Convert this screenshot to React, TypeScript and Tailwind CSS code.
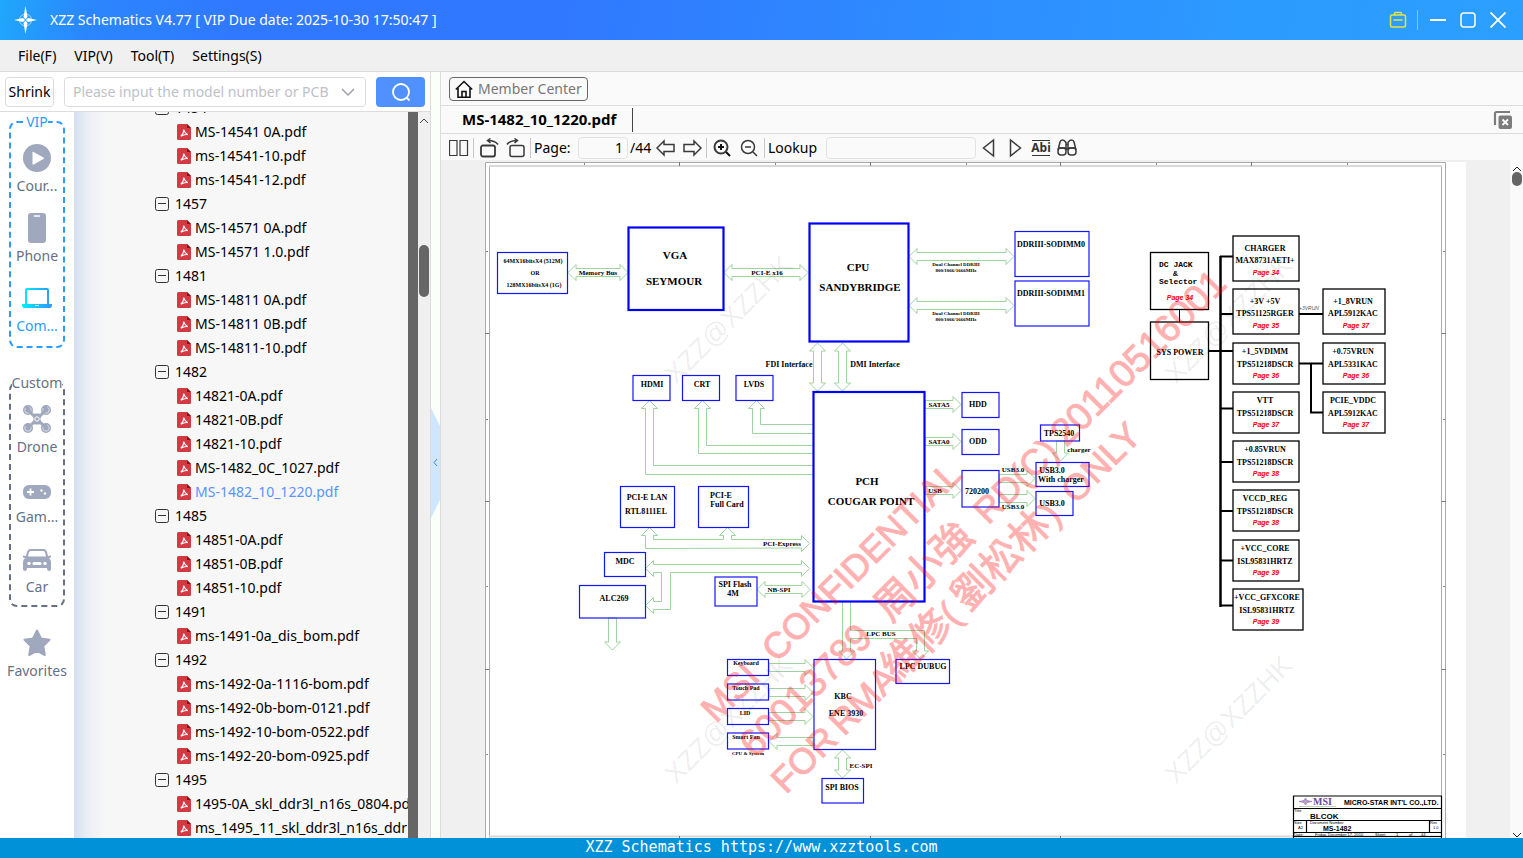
import type { ReactNode } from "react";

type TreeGroup = { name: string; files: string[] };

const tree: TreeGroup[] = [
    { name: "1454", files: ["MS-14541 0A.pdf", "ms-14541-10.pdf", "ms-14541-12.pdf"] },
    { name: "1457", files: ["MS-14571 0A.pdf", "MS-14571 1.0.pdf"] },
    { name: "1481", files: ["MS-14811 0A.pdf", "MS-14811 0B.pdf", "MS-14811-10.pdf"] },
    { name: "1482", files: ["14821-0A.pdf", "14821-0B.pdf", "14821-10.pdf", "MS-1482_0C_1027.pdf", "MS-1482_10_1220.pdf"] },
    { name: "1485", files: ["14851-0A.pdf", "14851-0B.pdf", "14851-10.pdf"] },
    { name: "1491", files: ["ms-1491-0a_dis_bom.pdf"] },
    { name: "1492", files: ["ms-1492-0a-1116-bom.pdf", "ms-1492-0b-bom-0121.pdf", "ms-1492-10-bom-0522.pdf", "ms-1492-20-bom-0925.pdf"] },
    { name: "1495", files: ["1495-0A_skl_ddr3l_n16s_0804.pdf", "ms_1495_11_skl_ddr3l_n16s_ddr"] },
];

const activeFile = "MS-1482_10_1220.pdf";

/* ---------- Title bar and menu ---------- */

const TitleBar = () => (
    <header className="flex h-10 shrink-0 items-center bg-[linear-gradient(100deg,#1fa8fb_0%,#2b86fd_6%,#3078ff_16%,#3078ff_36%,#2c9bff_82%,#2b9fff_100%)] pr-[17px] pl-[13px] text-white">
        <svg width="25" height="30" viewBox="0 0 25 30" aria-hidden="true">
            <circle cx="12.5" cy="15" r="6" fill="none" stroke="#a9dcff" strokeWidth="1" />
            <path d="M12.5 1l2 11-2 2.500-2-2.500zM12.500 29l2-11-2-2.500-2 2.500z" fill="#fff" />
            <path d="M1 15l9-2 2 2-2 2zM24 15l-9-2-2 2 2 2z" fill="#fff" />
        </svg>
        <h1 className="ml-3 flex-1 text-sm whitespace-pre">XZZ Schematics V4.77 [ VIP Due date: 2025-10-30 17:50:47 ]</h1>
        <button type="button" aria-label="Toolbox" className="text-[#e2e53c]">
            <svg width="18" height="18" viewBox="0 0 18 18" fill="none" stroke="currentColor" strokeWidth="1.5">
                <rect x="1.500" y="4" width="15" height="12" rx="1.500" />
                <path d="M5.500 4V2.500Q5.500 1.500 6.500 1.500h5q1 0 1 1V4M4.500 9h9" />
            </svg>
        </button>
        <span className="mr-3 ml-2.5 h-5 w-px bg-white/40" />
        <button type="button" aria-label="Minimize">
            <svg width="16" height="16" viewBox="0 0 16 16"><path d="M0 8h16" stroke="#fff" strokeWidth="2" /></svg>
        </button>
        <button type="button" aria-label="Maximize" className="ml-3.5">
            <svg width="16" height="16" viewBox="0 0 16 16"><rect x="1" y="1" width="14" height="14" rx="3" fill="none" stroke="#fff" strokeWidth="1.500" /></svg>
        </button>
        <button type="button" aria-label="Close" className="ml-3.5">
            <svg width="16" height="16" viewBox="0 0 16 16"><path d="M.5.5l15 15M15.500.5l-15 15" stroke="#fff" strokeWidth="1.800" /></svg>
        </button>
    </header>
);

const MenuBar = () => (
    <nav className="flex h-8 shrink-0 items-center gap-[18px] border-b border-[#dcdcdc] bg-[#f0f0f0] px-[18px] pt-px">
        {["File(F)", "VIP(V)", "Tool(T)", "Settings(S)"].map((item) => (
            <button key={item} type="button">{item}</button>
        ))}
    </nav>
);

/* ---------- Left pane ---------- */

const SearchRow = () => (
    <form className="flex h-10 shrink-0 items-center border-b border-[#dcdcdc] bg-white px-[5px]">
        <button type="button" className="h-[30px] w-[49px] rounded border border-[#dcdcdc]">Shrink</button>
        <div className="ml-2.5 flex h-[30px] min-w-0 flex-1 items-center rounded border border-[#dcdcdc] pr-2.5 pl-2">
            <input
                type="text"
                aria-label="Model number"
                placeholder="Please input the model number or PCB"
                className="min-w-0 flex-1 outline-none placeholder:text-[#bdc1c8]"
            />
            <svg width="14" height="14" viewBox="0 0 14 14" fill="none" stroke="#9aa0ab" strokeWidth="1.500" aria-hidden="true"><path d="M1 4l6 6 6-6" /></svg>
        </div>
        <button type="submit" aria-label="Search" className="ml-2.5 flex h-[30px] w-[49px] items-center justify-center rounded bg-[#5091ff]">
            <svg width="20" height="20" viewBox="0 0 20 20" fill="none" stroke="#fff" strokeWidth="1.800"><circle cx="10" cy="10" r="8" /><path d="M15.500 15.500l3 3" /></svg>
        </button>
    </form>
);

const PlayIcon = () => (
    <svg width="28" height="28" viewBox="0 0 28 28"><circle cx="14" cy="14" r="14" fill="#a0a8bd" /><path d="M9.500 8.500v11.500q0 1 1 .5l10-5.500q1-.8 0-1.500l-10-5.500q-1-.5-1 .5z" fill="#fff" /></svg>
);
const PhoneIcon = () => (
    <svg width="28" height="30" viewBox="0 0 28 30"><rect x="5" width="18" height="30" rx="3" fill="#a0a8bd" /><path d="M11.500 3h5" stroke="#fff" strokeWidth="1.500" strokeLinecap="round" /></svg>
);
const LaptopIcon = () => (
    <svg width="30" height="22" viewBox="0 0 30 22">
        <defs><linearGradient id="laptop"><stop stopColor="#00f0ff" /><stop offset="1" stopColor="#2f96f8" /></linearGradient></defs>
        <path d="M5 1h20q2 0 2 2v14h3q0 4-2 4H2q-2 0-2-4h3V3q0-2 2-2zM5 3v14h20V3z" fill="url(#laptop)" fillRule="evenodd" />
        <path d="M13 18.500h4" stroke="#bfeaff" />
    </svg>
);
const DroneIcon = () => (
    <svg width="28" height="28" viewBox="0 0 28 28">
        <path d="M12 10h4v8h-4z" fill="#a0a8bd" stroke="#a0a8bd" strokeWidth="3" strokeLinejoin="round" />
        {[[5, 5], [23, 5], [5, 23], [23, 23]].map(([x, y]) => (
            <g key={`${x}-${y}`} fill="#a0a8bd">
                <circle cx={x} cy={y} r="5" />
                <circle cx={x} cy={y} r="3.200" stroke="#e6e9f0" strokeWidth=".8" strokeDasharray="12 4" />
            </g>
        ))}
        <path d="M5 5l7 7M23 5l-7 7M5 23l7-7M23 23l-7-7" stroke="#a0a8bd" strokeWidth="3" />
        <circle cx="14" cy="14" r="2.200" fill="none" stroke="#fff" />
    </svg>
);
const GamepadIcon = () => (
    <svg width="28" height="20" viewBox="0 -6 28 20"><rect width="28" height="14" rx="6" fill="#a0a8bd" /><path d="M4 7h7M7.500 3.500v7" stroke="#fff" strokeWidth="1.800" /><circle cx="18.500" cy="5.500" r="1.200" fill="#fff" /><circle cx="22" cy="8.500" r="1.200" fill="#fff" /></svg>
);
const CarIcon = () => (
    <svg width="28" height="26" viewBox="0 -2 28 26">
        <path d="M7 1h14q2 0 3 3l1 4 3-.5v2l-2 .5q2 2 2 4v7q0 2-2 2t-2-3H4q0 3-2 3t-2-2v-7q0-2 2-4L0 9.500v-2L3 8l1-4q1-3 3-3zM7.500 3Q6.500 3 6 4.500L5 8.500h18l-1-4Q21.500 3 20.500 3z" fill="#a0a8bd" fillRule="evenodd" />
        <circle cx="6" cy="15.500" r="1.700" fill="#fff" /><circle cx="22" cy="15.500" r="1.700" fill="#fff" /><path d="M11 15.500h6" stroke="#fff" strokeWidth="3" strokeLinecap="round" />
    </svg>
);
const StarIcon = () => (
    <svg width="28" height="28" viewBox="0 0 28 28"><path d="M14 1.500l4 8 8.500 1.300-6.200 6.200 1.500 9L14 21.800 6.200 26l1.500-9-6.200-6.200L10 9.500z" fill="#a0a8bd" stroke="#a0a8bd" strokeWidth="2" strokeLinejoin="round" /></svg>
);

const RailItem = ({ icon, label, active }: { icon: ReactNode; label: string; active?: boolean }) => (
    <button type="button" className={active ? "flex w-full flex-col items-center pt-3 pb-1.5 text-[#2d9bff]" : "flex w-full flex-col items-center pt-3 pb-1.5 text-[#667085]"}>
        <span className="flex h-7 items-center justify-center">{icon}</span>
        <span className="mt-1 leading-5">{label}</span>
    </button>
);

const CategoryRail = () => (
    <aside className="flex w-[74px] shrink-0 flex-col items-center overflow-hidden bg-white">
        <fieldset className="w-14 rounded-lg border-2 border-dashed border-[#2d9bff] pb-1">
            <legend className="mx-auto leading-5 text-[#2d9bff]">VIP</legend>
            <RailItem icon={<PlayIcon />} label="Cour..." />
            <RailItem icon={<PhoneIcon />} label="Phone" />
            <RailItem icon={<LaptopIcon />} label="Com..." active />
        </fieldset>
        <fieldset className="mt-[25px] w-14 rounded-lg border-2 border-dashed border-[#667085] pb-0.5">
            <legend className="mx-auto leading-5 text-[#667085]">Custom</legend>
            <RailItem icon={<DroneIcon />} label="Drone" />
            <RailItem icon={<GamepadIcon />} label="Gam..." />
            <RailItem icon={<CarIcon />} label="Car" />
        </fieldset>
        <div className="mt-2.5 w-full">
            <RailItem icon={<StarIcon />} label="Favorites" />
        </div>
    </aside>
);

const PdfIcon = () => (
    <svg width="14" height="16" viewBox="0 0 14 16" className="shrink-0" aria-hidden="true">
        <path d="M1.500 0H10l4 4v10.500q0 1.500-1.500 1.500h-11Q0 16 0 14.500v-13Q0 0 1.500 0z" fill="#d23a42" />
        <path d="M10 0l4 4h-4z" fill="#8f1219" />
        <path d="M6.800 5.500q.6 3.500 4 5.200-3-.6-7 1.500 3-2.500 3-6.700" fill="none" stroke="#fff" strokeWidth="1.100" />
    </svg>
);

const FileTree = () => (
    <div className="min-w-0 flex-1 overflow-hidden bg-[linear-gradient(90deg,#d5dff0_0px,#ebeff5_14px,#f7f7f7_32px)]">
        <ul className="-mt-4 leading-6 whitespace-nowrap">
            {tree.map((group) => (
                <li key={group.name}>
                    <button type="button" className="flex h-6 items-center gap-1.5 pl-[81px]">
                        <svg width="14" height="14" viewBox="0 0 14 14" fill="none" stroke="#333" aria-hidden="true"><rect x=".5" y=".5" width="13" height="13" rx="2" /><path d="M3 6.500h8" /></svg>
                        {group.name}
                    </button>
                    <ul>
                        {group.files.map((file) => (
                            <li key={file}>
                                <button type="button" className={file === activeFile ? "flex h-6 items-center gap-1 pl-[103px] text-[#5b93ff]" : "flex h-6 items-center gap-1 pl-[103px]"}>
                                    <PdfIcon />
                                    {file}
                                </button>
                            </li>
                        ))}
                    </ul>
                </li>
            ))}
        </ul>
    </div>
);

const LeftPane = () => (
    <section className="flex w-[431px] shrink-0 flex-col border-r border-[#dcdcdc]">
        <SearchRow />
        <div className="flex min-h-0 flex-1">
            <CategoryRail />
            <FileTree />
            <div className="w-2.5 shrink-0 bg-[#666]" />
            <div className="flex w-3 shrink-0 flex-col items-center bg-[#f0f0f0] pt-1.5">
                <svg width="10" height="6" viewBox="0 0 10 6" fill="none" stroke="#444"><path d="M1 5l4-4 4 4" /></svg>
                <div className="mt-[121px] h-[52px] w-2.5 rounded-full bg-[#666]" />
            </div>
        </div>
    </section>
);

const Splitter = () => (
    <div className="flex w-2.5 shrink-0 items-center border-r border-[#dcdcdc] bg-[#fafffa]">
        <button type="button" aria-label="Collapse panel" className="mt-4">
            <svg width="9" height="110" viewBox="0 0 9 110"><path d="M0 0l9 18v74l-9 18z" fill="#cfe7fd" /><path d="M6 51l-3 3.500 3 3.500" fill="none" stroke="#3b8be0" /></svg>
        </button>
    </div>
);

/* ---------- Schematic page ---------- */

const arrowPath = (from: number, to: number, mid: number, vertical: boolean, heads: "both" | "end" | "start") => {
    const dir = to > from ? 1 : -1;
    const points: [number, number][] = [];
    if (heads !== "end") {
        points.push([from + 8 * dir, mid + 4], [from + 8 * dir, mid + 8], [from, mid], [from + 8 * dir, mid - 8], [from + 8 * dir, mid - 4]);
    } else {
        points.push([from, mid + 4], [from, mid - 4]);
    }
    if (heads !== "start") {
        points.push([to - 8 * dir, mid - 4], [to - 8 * dir, mid - 8], [to, mid], [to - 8 * dir, mid + 8], [to - 8 * dir, mid + 4]);
    } else {
        points.push([to, mid - 4], [to, mid + 4]);
    }
    return points.map(([a, b]) => (vertical ? `${b},${a}` : `${a},${b}`)).join(" ");
};

// [from, to, mid, vertical, heads]
const arrows: [number, number, number, boolean, "both" | "end" | "start"][] = [
    [568, 628, 272.5, false, "both"],
    [724, 808, 272.5, false, "both"],
    [909, 1014, 256.5, false, "both"],
    [909, 1014, 305.5, false, "both"],
    [343, 391, 817.5, true, "both"],
    [343, 391, 842.5, true, "both"],
    [925, 961, 404.5, false, "end"],
    [925, 961, 441.5, false, "end"],
    [925, 961, 490.5, false, "end"],
    [999, 1035, 478.5, false, "end"],
    [999, 1035, 498.5, false, "end"],
    [441, 461, 1060.5, true, "end"],
    [757, 810, 589.5, false, "both"],
    [618, 650, 612.5, true, "end"],
    [769, 813, 667.5, false, "end"],
    [769, 813, 692.5, false, "end"],
    [769, 813, 716.5, false, "end"],
    [769, 813, 741.5, false, "start"],
    [750, 778, 842.5, true, "both"],
];

const busLines = [
    "M813 474.500H645.500V408.500h-4l8-8 8 8h-4V465.500H813",
    "M813 453.500H698.500V408.500h-4l8-8 8 8h-4V445.500H813",
    "M813 433.500H752.500V408.500h-4l8-8 8 8h-4V424.500H813",
    "M645.500 548.500V535.500h-4l8-8 8 8h-4v4H723.500v-4h-4l8-8 8 8h-4v4H801.500v-4l8 8-8 8v-3.500z",
    "M661.500 572.500h-8v4l-8-8 8-8v4H801.500v-4l8 8-8 8v-4H670.500v37H653.500v4l-8-8 8-8v4h8z",
    "M842.500 602v49h-4l8 8 8-8h-4v-12.500h66v12.500h-4l8 8 8-8h-4v-20.500h-74V602",
];

// [x, y, width, height]
const boxes: [number, number, number, number][] = [
    [497.5, 252.5, 70, 41], [1015, 231.5, 74, 45], [1015, 281, 74, 45],
    [633, 375.5, 37, 25], [682.5, 375.5, 37, 25], [736, 375.5, 37, 25],
    [962, 392.5, 37, 25], [962, 429.5, 37, 25], [962, 470.5, 37, 36.5], [1040.5, 425, 39, 16],
    [1036, 462.5, 53, 24], [1036, 491.5, 37, 24],
    [620.5, 486.5, 54, 41], [698.5, 486.5, 50, 41], [604.5, 552.5, 41, 24], [579.5, 585.5, 66, 32.5],
    [715, 577, 42, 29], [814, 659.5, 61.5, 90], [896, 659.5, 53.5, 24],
    [727.5, 659.5, 41, 16], [727.5, 684, 41, 16], [727.5, 708.5, 41, 16], [727.5, 733, 41, 16], [822, 778.5, 41.5, 24.5],
];

const chipBoxes: [number, number, number, number][] = [
    [628.5, 227.5, 95, 82.5], [809.5, 223.5, 99, 118], [813.5, 392, 111, 209.5],
];

// [text, x, baseline]
type Label = [string, number, number];

const chipLabels: Label[] = [
    ["VGA", 675, 259], ["SEYMOUR", 674, 285], ["CPU", 858, 271], ["SANDYBRIDGE", 860, 291],
    ["PCH", 867, 485], ["COUGAR POINT", 871, 505],
];

const boxLabels: Label[] = [
    ["DDRIII-SODIMM0", 1051, 247], ["DDRIII-SODIMM1", 1051, 296], ["HDMI", 652, 387], ["CRT", 702, 387], ["LVDS", 754, 387],
    ["HDD", 978, 407], ["ODD", 978, 444], ["720200", 977, 494], ["TPS2540", 1059, 436], ["USB3.0", 1052, 473], ["With charger", 1061, 482], ["USB3.0", 1052, 506],
    ["PCI-E LAN", 647, 500], ["RTL8111EL", 646, 514], ["PCI-E", 721, 498], ["Full Card", 727, 507], ["MDC", 625, 564], ["ALC269", 614, 601],
    ["SPI Flash", 735, 587], ["4M", 733, 596], ["KBC", 843, 699], ["ENE 3930", 846, 716], ["LPC DUBUG", 923, 669], ["SPI BIOS", 842, 790],
    ["FDI Interface", 789, 367], ["DMI Interface", 875, 367],
];

const busLabels: Label[] = [
    ["Memory Bus", 598, 275], ["PCI-E x16", 767, 275], ["SATA5", 939, 407], ["SATA0", 939, 444], ["USB", 935, 493],
    ["USB3.0", 1013, 472], ["USB3.0", 1013, 509], ["charger", 1079, 452], ["PCI-Express", 782, 546], ["NB-SPI", 779, 592],
    ["LPC BUS", 881, 636], ["EC-SPI", 861, 768],
];

const smallLabels: Label[] = [
    ["64MX16bitsX4 (512M)", 533, 263], ["OR", 535, 275], ["128MX16bitsX4 (1G)", 534, 287],
    ["Keyboard", 746, 665], ["Touch Pad", 746, 690], ["LID", 745, 715], ["Smart Fan", 746, 739],
];

const tinyLabels: Label[] = [
    ["Dual Channel DDRIII", 956, 266], ["800/1066/1666MHz", 956, 272],
    ["Dual Channel DDRIII", 956, 315], ["800/1066/1666MHz", 956, 321], ["CPU & System", 748, 755],
];

type Regulator = { x: number; y: number; w: number; h: number; lines: [string, string]; page: string };

const regulators: Regulator[] = [
    { x: 1233, y: 236, w: 66, h: 45, lines: ["CHARGER", "MAX8731AETI+"], page: "Page 34" },
    { x: 1233, y: 289, w: 66, h: 45, lines: ["+3V +5V", "TPS51125RGER"], page: "Page 35" },
    { x: 1233, y: 343, w: 66, h: 41, lines: ["+1_5VDIMM", "TPS51218DSCR"], page: "Page 36" },
    { x: 1233, y: 392, w: 66, h: 41, lines: ["VTT", "TPS51218DSCR"], page: "Page 37" },
    { x: 1233, y: 441, w: 66, h: 41, lines: ["+0.85VRUN", "TPS51218DSCR"], page: "Page 38" },
    { x: 1233, y: 490, w: 66, h: 41, lines: ["VCCD_REG", "TPS51218DSCR"], page: "Page 38" },
    { x: 1233, y: 540, w: 66, h: 41, lines: ["+VCC_CORE", "ISL95831HRTZ"], page: "Page 39" },
    { x: 1233, y: 589, w: 70, h: 41, lines: ["+VCC_GFXCORE", "ISL95831HRTZ"], page: "Page 39" },
    { x: 1323, y: 289, w: 62, h: 45, lines: ["+1_8VRUN", "APL5912KAC"], page: "Page 37" },
    { x: 1323, y: 343, w: 62, h: 41, lines: ["+0.75VRUN", "APL5331KAC"], page: "Page 36" },
    { x: 1323, y: 392, w: 62, h: 41, lines: ["PCIE_VDDC", "APL5912KAC"], page: "Page 37" },
];

const Labels = ({ items, className }: { items: Label[]; className: string }) => (
    <g className={className} textAnchor="middle">
        {items.map(([text, x, y]) => (
            <text key={`${text}-${x}-${y}`} x={x} y={y}>{text}</text>
        ))}
    </g>
);

const PowerTree = () => (
    <g>
        <g fill="none" stroke="#000">
            <path d="M1220.500 256V607" strokeWidth="2.500" />
            <path d="M1220 256.500h13M1220 314h13M1208 351h25M1220 408.500h13M1220 462h13M1220 511h13M1220 560.500h13M1220 605.500h13M1299 314h24M1299 363.500h24M1311 363v49.500h12" strokeWidth="2" />
            <path d="M1179.500 310v12" />
            <rect x="1150.500" y="252.500" width="58" height="57" strokeWidth="1.300" />
            <rect x="1150.500" y="322" width="58" height="57.500" strokeWidth="1.300" />
            {regulators.map((r) => (
                <rect key={`${r.x}-${r.y}`} x={r.x} y={r.y} width={r.w} height={r.h} strokeWidth="1.300" />
            ))}
        </g>
        <g className="font-['Liberation_Serif',serif] text-[8px] font-bold" textAnchor="middle">
            <text x="1180" y="355">SYS POWER</text>
            {regulators.map((r) => (
                <g key={`${r.x}-${r.y}`}>
                    <text x={r.x + r.w / 2 - 1} y={r.y + (r.h > 41 ? 15 : 11)}>{r.lines[0]}</text>
                    <text x={r.x + r.w / 2 - 1} y={r.y + (r.h > 41 ? 27 : 24)}>{r.lines[1]}</text>
                </g>
            ))}
        </g>
        <g className="font-['Liberation_Mono',monospace] text-[8px] font-bold">
            <text x="1159" y="267">DC JACK</text>
            <text x="1173" y="276">&amp;</text>
            <text x="1159" y="284">Selector</text>
        </g>
        <g className="fill-[#f00] font-['Liberation_Sans',sans-serif] text-[7px] font-bold italic" textAnchor="middle">
            <text x="1180" y="300">Page 34</text>
            {regulators.map((r) => (
                <text key={`${r.x}-${r.y}`} x={r.x + 33} y={r.y + (r.h > 41 ? 39 : 35)}>{r.page}</text>
            ))}
        </g>
        <text x="1299" y="310" className="fill-[#555] font-['Liberation_Sans',sans-serif] text-[5px] italic">+3VRUN</text>
    </g>
);

const SheetTitleBlock = () => (
    <g className="font-['Liberation_Sans',sans-serif]">
        <path d="M1293.500 838V796h148v42M1293.500 808.500h148M1293.500 820.500h148M1306.500 820.500v12M1429.500 820.500v12M1293.500 832.500h148M1293.500 836.500h148" fill="none" stroke="#000" strokeWidth="1.200" />
        <path d="M1299 801.500l5-1 1.500-2.500 1.500 2.500 5 1-5 1-1.500 2.500-1.500-2.500z" fill="#b9a0cc" stroke="#8a67a8" strokeWidth=".6" />
        <text x="1313" y="805" className="fill-[#6b4a94] font-['Liberation_Serif',serif] text-[10px] font-bold">MSI</text>
        <path d="M1299 806.500h37" stroke="#9ac09a" strokeWidth=".7" />
        <g className="text-[7px] font-bold">
            <text x="1344" y="805">MICRO-STAR INT'L CO.,LTD.</text>
            <text x="1310" y="819" className="text-[8px]">BLCOK</text>
            <text x="1323" y="831">MS-1482</text>
        </g>
        <g className="text-[4px]">
            <text x="1294" y="812">Title</text>
            <text x="1294" y="824">Size</text>
            <text x="1298" y="829">A2</text>
            <text x="1310" y="824">Document Number</text>
            <text x="1430" y="824">Rev</text>
            <text x="1433" y="829">1.0</text>
            <text x="1294" y="836">Date:</text>
            <text x="1315" y="836">Friday, December 17, 2010</text>
            <text x="1375" y="836">Sheet</text>
            <text x="1396" y="836">1</text>
            <text x="1409" y="836">of</text>
            <text x="1421" y="836">44</text>
        </g>
    </g>
);

const Watermarks = () => (
    <g className="font-['Liberation_Sans','Noto_Sans_CJK_TC',sans-serif]">
        <g className="fill-black/8 text-[27px]">
            {[[676, 385], [676, 785], [1176, 385], [1176, 785]].map(([x, y]) => (
                <text key={`${x}-${y}`} transform={`translate(${x} ${y}) rotate(-45)`}>XZZ@XZZHK</text>
            ))}
        </g>
        <g className="fill-[#f00] stroke-[#f00] text-[36px] opacity-30" strokeWidth="1">
            <g transform="translate(716 724) rotate(-45)">
                <text x="0" y="0">MSI</text>
                <text x="86" y="0">CONFIDENTIAL</text>
            </g>
            <g transform="translate(755 759) rotate(-45)">
                <text x="0" y="0" className="text-[38px]">60013789</text>
                <text x="192" y="0" className="text-[40px]">周小強</text>
                <text x="330" y="0">RD(C)</text>
                <text x="440" y="0" className="text-[38px]">20110516001</text>
            </g>
            <g transform="translate(786 795) rotate(-45)">
                <text x="0" y="0">FOR</text>
                <text x="82" y="0">RMA</text>
                <text x="158" y="0" className="text-[40px]">維修</text>
                <text x="238" y="0">(</text>
                <text x="258" y="0" className="text-[40px]">劉松林</text>
                <text x="380" y="0">)</text>
                <text x="410" y="0">ONLY</text>
            </g>
        </g>
    </g>
);

const SchematicPage = () => (
    <svg width="981" height="676" viewBox="485 162 981 676" className="shrink-0 bg-white" role="img" aria-label="MS-1482 block diagram">
        <g fill="none" stroke="#aaa">
            <path d="M485.500 838V162.500H1445.500V838M489.500 838V166M1441.500 166V838" />
            <path d="M489 166H1442M489 836.500H1442" stroke="#d8d8d8" strokeWidth="2" />
            <path d="M679.500 162v4M870.500 162v4M1060.500 162v4M1251.500 162v4M679.500 836v2M870.500 836v2M1060.500 836v2M485 333.500h4M485 501.500h4M485 669.500h4M1442 333.500h4M1442 501.500h4M1442 669.500h4" stroke="#777" />
            <path d="M584.500 163v2M775.500 163v2M966.500 163v2M1156.500 163v2M1347.500 163v2M486 251.500h2M486 419.500h2M486 586.500h2M486 754.500h2M1443 251.500h2M1443 419.500h2M1443 586.500h2M1443 754.500h2" stroke="#888" />
        </g>
        <g fill="none" stroke="#9fd39f">
            {arrows.map(([from, to, mid, vertical, heads]) => (
                <polygon key={`${from}-${mid}`} points={arrowPath(from, to, mid, vertical, heads)} />
            ))}
            {busLines.map((d) => (
                <path key={d} d={d} />
            ))}
        </g>
        <g fill="none" stroke="#1414ff" strokeWidth="1.200">
            {boxes.map(([x, y, width, height]) => (
                <rect key={`${x}-${y}`} x={x} y={y} width={width} height={height} />
            ))}
        </g>
        <g fill="none" stroke="#0000f5" strokeWidth="2.200">
            {chipBoxes.map(([x, y, width, height]) => (
                <rect key={`${x}-${y}`} x={x} y={y} width={width} height={height} />
            ))}
        </g>
        <g className="font-['Liberation_Serif',serif] font-bold">
            <Labels items={chipLabels} className="text-[11px]" />
            <Labels items={boxLabels} className="text-[8px]" />
            <Labels items={busLabels} className="text-[7px]" />
            <Labels items={smallLabels} className="text-[6px]" />
            <Labels items={tinyLabels} className="text-[5px]" />
        </g>
        <PowerTree />
        <SheetTitleBlock />
        <Watermarks />
    </svg>
);

/* ---------- Right pane ---------- */

const ToolIcon = ({ label, width, className, children }: { label: string; width: number; className: string; children: ReactNode }) => (
    <button type="button" aria-label={label} className={className}>
        <svg width={width} height="20" viewBox={`0 0 ${width} 20`} fill="none" stroke="#3a3a3a" strokeWidth="1.500">{children}</svg>
    </button>
);

const Divider = ({ className }: { className: string }) => <span className={`h-5 w-px bg-[#c8c8c8] ${className}`} />;

const ViewerToolbar = () => (
    <div className="flex h-[26px] shrink-0 items-center bg-[#fafafa] pt-px pl-2">
        <ToolIcon label="Two pages" width={20} className=""><path d="M.5 2.500h7.500v15H.5zM11 2.500h7.500v15H11z" strokeWidth="1.200" /></ToolIcon>
        <Divider className="ml-1" />
        <ToolIcon label="Rotate left" width={20} className="ml-1.5"><rect x="1" y="7.500" width="14" height="11" rx="2" strokeWidth="1.800" /><path d="M18 6.500Q15 2.500 8 2.500M10.500.5L7.500 2.500l3 2.500" /></ToolIcon>
        <ToolIcon label="Rotate right" width={20} className="ml-1.5"><rect x="4" y="7.500" width="14" height="11" rx="2" /><path d="M1 6.500Q4 2.500 11 2.500M8.500.5l3 2-3 2.500" /></ToolIcon>
        <Divider className="ml-1" />
        <label htmlFor="page" className="ml-[3px] w-10">Page:</label>
        <input id="page" type="text" defaultValue="1" className="ml-1 h-[22px] w-[50px] rounded-sm border border-[#e2e2e2] pr-1 text-right outline-none" />
        <span className="ml-0.5 w-6">/44</span>
        <ToolIcon label="Previous page" width={20} className="ml-0.5"><path d="M1 10l7-7v3.500h10v7H8V17z" /></ToolIcon>
        <ToolIcon label="Next page" width={20} className="ml-1.5"><path d="M19 10l-7-7v3.500H2v7h10V17z" /></ToolIcon>
        <Divider className="ml-1" />
        <ToolIcon label="Zoom in" width={18} className="ml-1.5"><circle cx="8" cy="9" r="6.500" strokeWidth="2" /><path d="M13 14l4 4M8 6v6M5 9h6" stroke="#111" strokeWidth="2" /></ToolIcon>
        <ToolIcon label="Zoom out" width={18} className="ml-[9px]"><circle cx="8" cy="9" r="6.500" /><path d="M13 14l4 4M5 9h6" /></ToolIcon>
        <Divider className="ml-1.5" />
        <label htmlFor="lookup" className="ml-[3px] w-[54px]">Lookup</label>
        <input id="lookup" type="text" className="ml-1 h-[22px] w-[150px] rounded-sm border border-[#e2e2e2] px-1 outline-none" />
        <ToolIcon label="Find previous" width={14} className="ml-1.5"><path d="M11.500 2v16L1.500 10z" /></ToolIcon>
        <ToolIcon label="Find next" width={14} className="ml-3"><path d="M2.500 2v16l10-8z" /></ToolIcon>
        <button type="button" className="ml-2.5 w-[18px] border-y border-[#333] text-xs leading-[14px] font-bold text-[#333]"><span className="-mx-1">Abi</span></button>
        <ToolIcon label="Find" width={20} className="ml-[7px]">
            <path d="M1 12L3 4q.5-2 2.500-2T9 4.500V12M19 12l-2-8q-.5-2-2.500-2T11 4.500V12M9 6.500h2M9 10.500h2M2 10h7M11 10h7" />
            <rect x="1" y="10" width="8" height="7" rx="3" /><rect x="11" y="10" width="8" height="7" rx="3" />
        </ToolIcon>
    </div>
);

const RightPane = () => (
    <main className="flex min-w-0 flex-1 flex-col bg-[#fafafa]">
        <div className="flex h-[34px] shrink-0 items-center border-b border-[#dcdcdc] pl-2">
            <button type="button" className="flex h-6 items-center rounded-sm border border-[#666] px-[5px] text-[#777]">
                <svg width="18" height="18" viewBox="0 0 18 18" className="mr-[5px]" fill="none" stroke="#111" strokeWidth="1.600"><path d="M.8 9.500L9 1.500l8.200 8M3 8v9.200h12V8M7 17v-5.500h4V17" /></svg>
                Member Center
            </button>
        </div>
        <div className="flex h-7 shrink-0 items-center border-b border-[#dcdcdc] pr-2.5 pl-[21px]">
            <button type="button" className="text-[15px] font-bold">{activeFile}</button>
            <span className="ml-4 h-6 w-px bg-[#444]" />
            <button type="button" aria-label="Close all tabs" className="ml-auto">
                <svg width="20" height="20" viewBox="0 0 20 20" fill="none"><path d="M2 15V3.500Q2 2 3.500 2H17" stroke="#7c7c7c" strokeWidth="2.200" /><rect x="5.500" y="5.500" width="13.500" height="13.500" rx="2" fill="#7c7c7c" /><path d="M9.500 9.500l5.500 5.500M15 9.500L9.500 15" stroke="#fff" strokeWidth="1.800" /></svg>
            </button>
        </div>
        <ViewerToolbar />
        <div className="flex min-h-0 flex-1">
            <div className="flex min-w-0 flex-1 items-start justify-center overflow-hidden bg-[#f0f0f0] pt-0.5">
                <SchematicPage />
            </div>
            <div className="flex w-[13px] shrink-0 flex-col items-center pt-1.5">
                <svg width="10" height="6" viewBox="0 0 10 6" fill="none" stroke="#222"><path d="M1 5l4-4 4 4" /></svg>
                <div className="h-3.5 w-2.5 rounded-full bg-[#666]" />
                <svg width="10" height="6" viewBox="0 0 10 6" fill="none" stroke="#222" className="mt-auto"><path d="M1 1l4 4 4-4" /></svg>
            </div>
        </div>
    </main>
);

export default function App() {
    return (
        <div className="flex h-screen flex-col overflow-hidden bg-[#f0f0f0] font-['Noto_Sans',sans-serif] text-sm text-black">
            <TitleBar />
            <MenuBar />
            <div className="flex min-h-0 flex-1">
                <LeftPane />
                <Splitter />
                <RightPane />
            </div>
            <footer className="flex h-5 shrink-0 items-center justify-center bg-[#0091d9] font-['DejaVu_Sans_Mono',monospace] text-[15px] text-white">
                XZZ Schematics https://www.xzztools.com
            </footer>
        </div>
    );
}
